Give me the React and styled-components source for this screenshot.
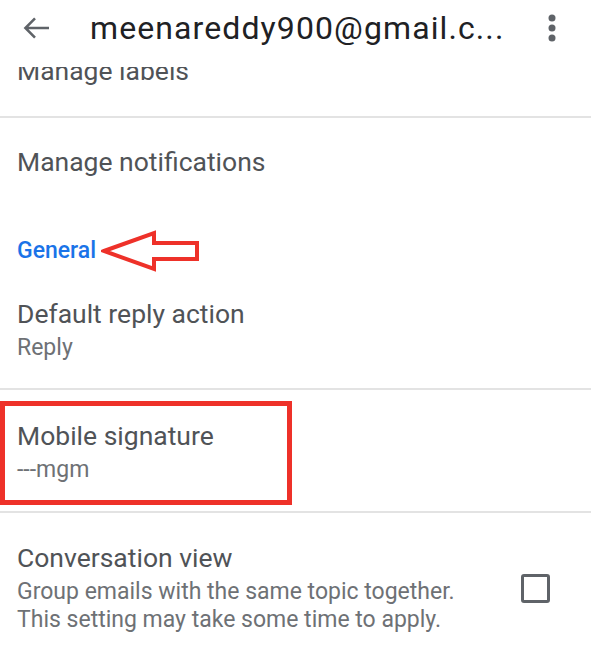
import React from "react";
import styled, { createGlobalStyle } from "styled-components";

const Global = createGlobalStyle`
  html, body { margin: 0; padding: 0; background: #fff; }
  body { font-family: Roboto, "Noto Sans", sans-serif; }
`;

const Screen = styled.div`
  width: 591px;
  height: 653px;
  overflow: hidden;
  background: #fff;
  display: flex;
  flex-direction: column;
`;

const Header = styled.header`
  height: 67px;
  flex: none;
  display: flex;
  align-items: flex-start;
  background: #fff;
  position: relative;
  z-index: 1;
`;

const HeaderBar = styled.div`
  height: 56px;
  flex: 1;
  display: flex;
  align-items: center;
  padding: 0 34px 0 21px;
`;

const BackIcon = styled.div`
  display: flex;
  align-items: center;
  width: 32px;
  height: 32px;
  flex: none;
`;

const Title = styled.h1`
  flex: 1;
  margin: 0 0 0 37px;
  font-family: Roboto, sans-serif;
  font-weight: 400;
  font-size: 32px;
  letter-spacing: 1.1px;
  color: #202124;
  white-space: nowrap;
  overflow: hidden;
`;

const MoreIcon = styled.div`
  display: flex;
  align-items: center;
  width: 10px;
  height: 32px;
  flex: none;
`;

const Viewport = styled.div`
  flex: 1;
  overflow: hidden;
`;

const List = styled.div`
  margin-top: -40px;
  display: flex;
  flex-direction: column;
`;

const Divider = styled.div`
  height: 2px;
  background: #e3e3e3;
  flex: none;
`;

const Row = styled.div`
  display: flex;
  align-items: center;
  padding: ${(p) => p.$pad || "28px 0"};
  padding-left: 17px;
  padding-right: 41px;
`;

const Texts = styled.div`
  flex: 1;
  display: flex;
  flex-direction: column;
`;

const ItemTitle = styled.div`
  font-size: 26.5px;
  line-height: 32px;
  color: #505357;
`;

const ItemSub = styled.div`
  font-size: 23px;
  line-height: 28px;
  color: #6e7175;
  ${ItemTitle} + & {
    margin-top: 4px;
  }
`;

const SectionHead = styled.div`
  display: flex;
  align-items: center;
  gap: 5px;
  padding: 31px 17px 0;
  height: 28px;
`;

const SectionLabel = styled.div`
  font-size: 23px;
  line-height: 28px;
  font-weight: 500;
  color: #1a73e8;
`;

const Highlight = styled.div`
  width: 292px;
  box-sizing: border-box;
  margin: 11px 0 6px;
  border: 5px solid #ee3129;
  padding: 14px 12px 16px;
`;

const Checkbox = styled.div`
  width: 29px;
  height: 29px;
  box-sizing: border-box;
  border: 3px solid #5f6368;
  border-radius: 3px;
  flex: none;
`;

const Arrow = () => (
  <svg width="100" height="42" viewBox="0 0 100 42" style={{ flex: "none" }}>
    <path
      d="M3 21 L53 3 L53 13 L96 13 L96 29 L53 29 L53 39 Z"
      fill="none"
      stroke="#ee3129"
      strokeWidth="4"
      strokeLinejoin="miter"
    />
  </svg>
);

export default function App() {
  return (
    <>
      <Global />
      <Screen>
        <Header>
          <HeaderBar>
            <BackIcon>
              <svg width="32" height="32" viewBox="0 0 24 24">
                <path
                  d="M21 12H3.5M10.5 4.8 3.3 12l7.2 7.2"
                  fill="none"
                  stroke="#5f6368"
                  strokeWidth="1.9"
                />
              </svg>
            </BackIcon>
            <Title>meenareddy900@gmail.c...</Title>
            <MoreIcon>
              <svg width="10" height="32" viewBox="0 0 10 32">
                <circle cx="5" cy="6" r="3.5" fill="#5f6368" />
                <circle cx="5" cy="16" r="3.5" fill="#5f6368" />
                <circle cx="5" cy="26" r="3.5" fill="#5f6368" />
              </svg>
            </MoreIcon>
          </HeaderBar>
        </Header>
        <Viewport>
          <List>
            <Row $pad="28px 0 29px">
              <Texts>
                <ItemTitle>Manage labels</ItemTitle>
              </Texts>
            </Row>
            <Divider />
            <Row $pad="28px 0 28px">
              <Texts>
                <ItemTitle>Manage notifications</ItemTitle>
              </Texts>
            </Row>
            <SectionHead>
              <SectionLabel>General</SectionLabel>
              <Arrow />
            </SectionHead>
            <Row $pad="33px 0 26px">
              <Texts>
                <ItemTitle>Default reply action</ItemTitle>
                <ItemSub>Reply</ItemSub>
              </Texts>
            </Row>
            <Divider />
            <Highlight>
              <Texts>
                <ItemTitle>Mobile signature</ItemTitle>
                <ItemSub>---mgm</ItemSub>
              </Texts>
            </Highlight>
            <Divider />
            <Row $pad="29px 0 20px">
              <Texts>
                <ItemTitle>Conversation view</ItemTitle>
                <ItemSub>Group emails with the same topic together.</ItemSub>
                <ItemSub>This setting may take some time to apply.</ItemSub>
              </Texts>
              <Checkbox />
            </Row>
          </List>
        </Viewport>
      </Screen>
    </>
  );
}
